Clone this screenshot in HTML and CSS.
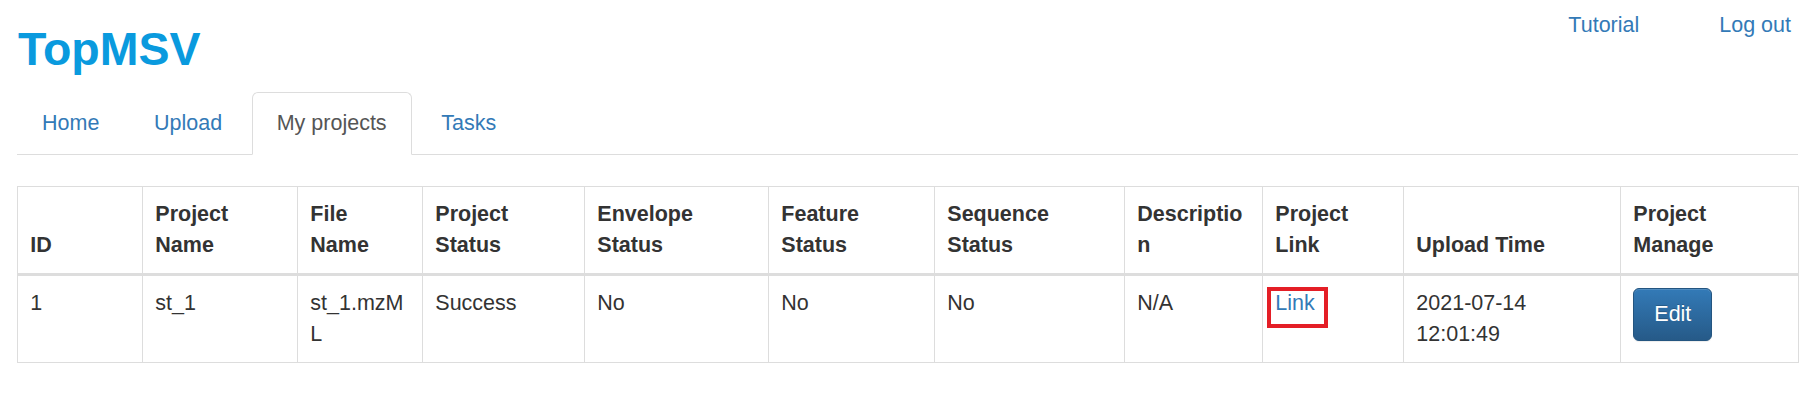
FILE: index.html
```html
<!DOCTYPE html>
<html lang="en">
<head>
<meta charset="utf-8">
<title>TopMSV - My projects</title>
<link rel="stylesheet" href="styles.css">
</head>
<body>
<div class="page">
  <header class="topbar">
    <h1 class="brand">TopMSV</h1>
    <nav class="userlinks">
      <a href="#" class="userlink">Tutorial</a>
      <a href="#" class="userlink">Log out</a>
    </nav>
  </header>

  <ul class="tabs">
    <li class="tab"><a href="#" class="tab-link">Home</a></li>
    <li class="tab"><a href="#" class="tab-link">Upload</a></li>
    <li class="tab active"><a href="#" class="tab-link">My projects</a></li>
    <li class="tab"><a href="#" class="tab-link">Tasks</a></li>
  </ul>

  <table class="projects">
    <colgroup>
      <col class="c-id">
      <col class="c-pname">
      <col class="c-fname">
      <col class="c-pstatus">
      <col class="c-env">
      <col class="c-feat">
      <col class="c-seq">
      <col class="c-desc">
      <col class="c-link">
      <col class="c-time">
      <col class="c-manage">
    </colgroup>
    <thead>
      <tr>
        <th>ID</th>
        <th>Project Name</th>
        <th>File Name</th>
        <th>Project Status</th>
        <th>Envelope Status</th>
        <th>Feature Status</th>
        <th>Sequence Status</th>
        <th>Description</th>
        <th>Project Link</th>
        <th>Upload Time</th>
        <th>Project Manage</th>
      </tr>
    </thead>
    <tbody>
      <tr>
        <td>1</td>
        <td>st_1</td>
        <td>st_1.mzML</td>
        <td>Success</td>
        <td>No</td>
        <td>No</td>
        <td>No</td>
        <td>N/A</td>
        <td><a href="#" class="proj-link">Link</a></td>
        <td>2021-07-14 12:01:49</td>
        <td><button class="btn-edit" type="button">Edit</button></td>
      </tr>
    </tbody>
  </table>
</div>
</body>
</html>
```

FILE: styles.css
```css
html, body {
  margin: 0;
  padding: 0;
  background: #fff;
}

body {
  font-family: "Liberation Sans", Arial, Helvetica, sans-serif;
  font-size: 21.5px;
  line-height: 30.7px;
  color: #333;
}

a {
  color: #337ab7;
  text-decoration: none;
}

.page {
  padding: 0 22px 0 17px;
}

/* Header */
.topbar {
  display: flex;
  justify-content: space-between;
  align-items: flex-start;
}

.brand {
  margin: 24px 0 17px 1px;
  font-size: 46.5px;
  line-height: 51px;
  font-weight: 700;
  color: #0a9ade;
}

.userlinks {
  display: flex;
  gap: 80px;
  margin-top: 10px;
  padding-right: 7px;
}

.userlink {
  color: #337ab7;
}

/* Tabs */
.tabs {
  list-style: none;
  margin: 0;
  padding: 0;
  display: flex;
  border-bottom: 1px solid #ddd;
}

.tab {
  margin-right: 4.6px;
  margin-bottom: -1px;
}

.tab-link {
  display: block;
  padding: 15.2px 24px;
  border: 1px solid transparent;
  border-radius: 6px 6px 0 0;
  color: #337ab7;
}

.tab.active .tab-link {
  color: #555;
  background: #fff;
  border-color: #ddd;
  border-bottom-color: #fff;
}

/* Table */
.projects {
  margin-top: 31px;
  width: 1781px;
  table-layout: fixed;
  border-collapse: collapse;
  border: 1px solid #ddd;
}

.c-id { width: 125px; }
.c-pname { width: 155px; }
.c-fname { width: 125px; }
.c-pstatus { width: 162px; }
.c-env { width: 184px; }
.c-feat { width: 166px; }
.c-seq { width: 190px; }
.c-desc { width: 138px; }
.c-link { width: 141px; }
.c-time { width: 217px; }
.c-manage { width: 178px; }

.projects th,
.projects td {
  padding: 12.3px;
  border: 1px solid #ddd;
  text-align: left;
  overflow-wrap: anywhere;
}

.projects th {
  vertical-align: bottom;
  font-weight: 700;
  border-bottom: 3px solid #ddd;
}

.projects td {
  vertical-align: top;
}

.proj-link {
  position: relative;
  color: #337ab7;
}

.proj-link::after {
  content: "";
  position: absolute;
  left: -8px;
  top: -4px;
  width: 61px;
  height: 41px;
  box-sizing: border-box;
  border: 4.5px solid #e41e26;
}

.btn-edit {
  display: inline-block;
  font-family: inherit;
  font-size: 21.5px;
  line-height: 30.7px;
  padding: 10px 20px;
  color: #fff;
  border: 1px solid #245580;
  border-radius: 6px;
  background-image: linear-gradient(to bottom, #337ab7 0, #265a88 100%);
  text-shadow: 0 -1px 0 rgba(0, 0, 0, .2);
  box-shadow: inset 0 1px 0 rgba(255, 255, 255, .15), 0 1px 1px rgba(0, 0, 0, .075);
  cursor: pointer;
}
```
